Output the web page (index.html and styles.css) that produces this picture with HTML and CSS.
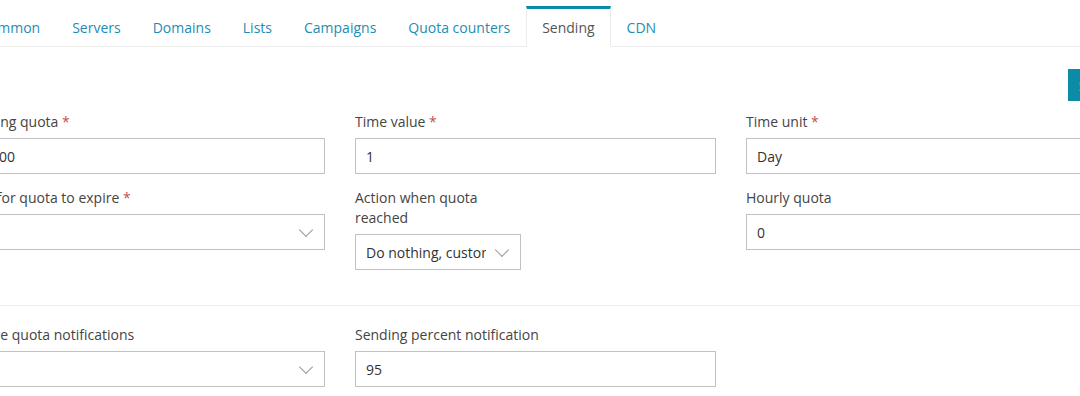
FILE: index.html
```html
<!DOCTYPE html>
<html lang="en">
<head>
    <meta charset="UTF-8">
    <title>Sending settings</title>
    <link rel="stylesheet" href="styles.css">
</head>
<body>
    <div class="page">
        <ul class="tabs">
            <li><a href="#">Common</a></li>
            <li><a href="#">Servers</a></li>
            <li><a href="#">Domains</a></li>
            <li><a href="#">Lists</a></li>
            <li><a href="#">Campaigns</a></li>
            <li><a href="#">Quota counters</a></li>
            <li class="active"><a href="#">Sending</a></li>
            <li><a href="#">CDN</a></li>
        </ul>

        <div class="toolbar">
            <button type="button" class="btn-primary">Save</button>
        </div>

        <form class="settings-form">
            <div class="form-row">
                <div class="form-group">
                    <label>Sending quota <span class="req">*</span></label>
                    <input type="text" value="10000">
                </div>
                <div class="form-group">
                    <label>Time value <span class="req">*</span></label>
                    <input type="text" value="1">
                </div>
                <div class="form-group">
                    <label>Time unit <span class="req">*</span></label>
                    <input type="text" value="Day">
                </div>
            </div>

            <div class="form-row">
                <div class="form-group">
                    <label>Wait for quota to expire <span class="req">*</span></label>
                    <div class="select-wrap">
                        <select><option>No</option></select>
                    </div>
                </div>
                <div class="form-group narrow">
                    <label>Action when quota reached</label>
                    <div class="select-wrap">
                        <select><option>Do nothing, custom</option></select>
                    </div>
                </div>
                <div class="form-group">
                    <label>Hourly quota</label>
                    <input type="text" value="0">
                </div>
            </div>

            <hr class="divider">

            <div class="form-row">
                <div class="form-group">
                    <label>Enable quota notifications</label>
                    <div class="select-wrap">
                        <select><option>No</option></select>
                    </div>
                </div>
                <div class="form-group">
                    <label>Sending percent notification</label>
                    <input type="text" value="95">
                </div>
            </div>
        </form>
    </div>
</body>
</html>
```

FILE: styles.css
```css
:root {
    --font-body: 'Open Sans', 'Liberation Sans', sans-serif;
    --color-text: #444;
    --color-link: #1d8db3;
    --color-primary: #0a8ba6;
    --color-border: #c2c2c2;
    --color-line: #ececec;
    --color-required: #c0504d;
}
body {
    margin: 0;
    font-family: var(--font-body);
    font-size: 14px;
    line-height: 20px;
    color: var(--color-text);
    background: #fff;
    overflow: hidden;
}
.page {
    width: 1236px;
    margin-left: -36px;
    padding-top: 6px;
}

/* tabs */
.tabs {
    display: flex;
    list-style: none;
    margin: 0;
    padding: 0;
    border-bottom: 1px solid var(--color-line);
}
.tabs li {
    margin-bottom: -1px;
}
.tabs a {
    display: block;
    padding: 9px 15px 8px 15px;
    border: 1px solid transparent;
    border-top: 3px solid transparent;
    color: var(--color-link);
    text-decoration: none;
}
.tabs .active a {
    color: #555;
    background: #fff;
    border-color: var(--color-line);
    border-top-color: var(--color-primary);
    border-bottom-color: #fff;
}

/* toolbar */
.toolbar {
    display: flex;
    justify-content: flex-end;
    margin-top: 22px;
}
.btn-primary {
    height: 32px;
    width: 132px;
    padding: 0 11px;
    font-family: var(--font-body);
    font-size: 14px;
    color: #fff;
    text-align: left;
    background: var(--color-primary);
    border: none;
    border-radius: 0;
}

/* form */
.settings-form {
    margin-top: 11px;
}
.form-row {
    display: grid;
    grid-template-columns: repeat(3, 361px);
    column-gap: 30px;
    align-items: start;
}
.form-group {
    margin-bottom: 14px;
}
.form-group.narrow {
    width: 166px;
}
label {
    display: block;
    margin-bottom: 6px;
}
.req {
    color: var(--color-required);
}
input[type="text"], select {
    display: block;
    width: 100%;
    height: 36px;
    box-sizing: border-box;
    padding: 0 10px;
    font-family: var(--font-body);
    font-size: 14px;
    color: #333;
    border: 1px solid var(--color-border);
    border-radius: 0;
    background: #fff;
    outline: none;
}
.select-wrap {
    position: relative;
}
select {
    appearance: none;
    -webkit-appearance: none;
    padding-right: 34px;
}
/* thin chevron drawn on top of the select */
.select-wrap::after {
    content: "";
    position: absolute;
    right: 14px;
    top: 11px;
    width: 9px;
    height: 9px;
    border-right: 1px solid #999;
    border-bottom: 1px solid #999;
    transform: rotate(45deg);
    pointer-events: none;
}
.divider {
    border: none;
    border-top: 1px solid var(--color-line);
    margin: 21px -15px 19px -15px;
}
```
